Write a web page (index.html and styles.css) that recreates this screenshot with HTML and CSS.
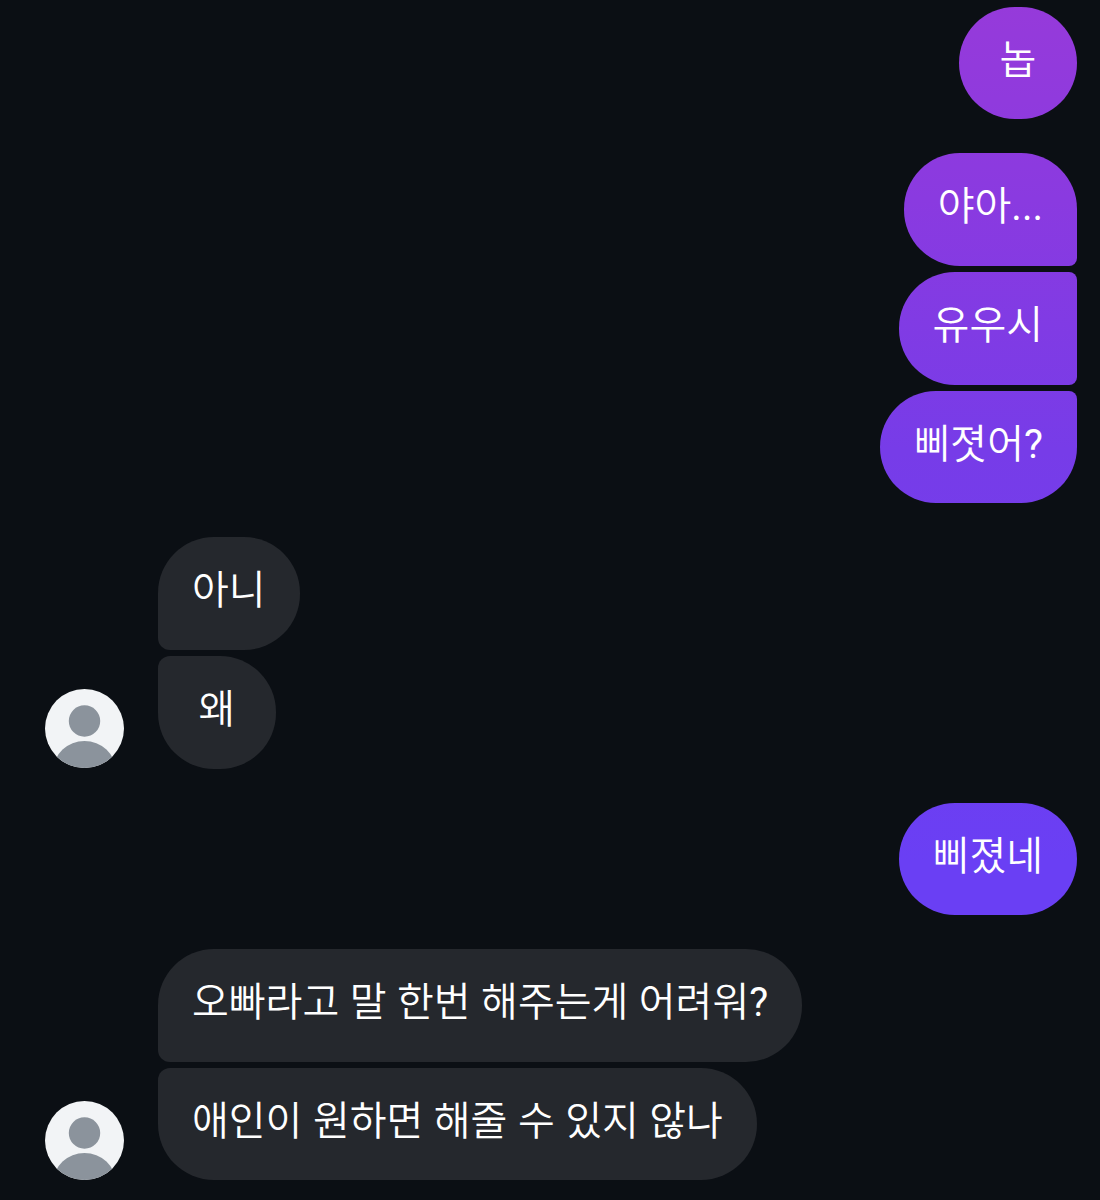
FILE: index.html
```html
<!DOCTYPE html>
<html lang="ko">
<head>
<meta charset="utf-8">
<title>Chat</title>
<link rel="stylesheet" href="styles.css">
</head>
<body>
<main class="chat">
  <section class="group out">
    <div class="bubble solo">놉</div>
  </section>
  <section class="group out">
    <div class="bubble first">야아<span class="punct">...</span></div>
    <div class="bubble middle">유우시</div>
    <div class="bubble last">삐졋어<span class="punct">?</span></div>
  </section>
  <section class="group in">
    <svg class="avatar" viewBox="0 0 79 79" aria-hidden="true">
      <defs><clipPath id="a1"><circle cx="39.5" cy="39.5" r="39.5"/></clipPath></defs>
      <g clip-path="url(#a1)">
        <rect width="79" height="79" fill="#f2f4f6"/>
        <circle cx="39.5" cy="32" r="15.7" fill="#8b939c"/>
        <ellipse cx="39.5" cy="81" rx="31" ry="29" fill="#8b939c"/>
      </g>
    </svg>
    <div class="stack">
      <div class="bubble first">아니</div>
      <div class="bubble last">왜</div>
    </div>
  </section>
  <section class="group out">
    <div class="bubble solo">삐졌네</div>
  </section>
  <section class="group in">
    <svg class="avatar" viewBox="0 0 79 79" aria-hidden="true">
      <defs><clipPath id="a2"><circle cx="39.5" cy="39.5" r="39.5"/></clipPath></defs>
      <g clip-path="url(#a2)">
        <rect width="79" height="79" fill="#f2f4f6"/>
        <circle cx="39.5" cy="32" r="15.7" fill="#8b939c"/>
        <ellipse cx="39.5" cy="81" rx="31" ry="29" fill="#8b939c"/>
      </g>
    </svg>
    <div class="stack">
      <div class="bubble first">오빠라고 말 한번 해주는게 어려워<span class="punct">?</span></div>
      <div class="bubble last">애인이 원하면 해줄 수 있지 않나</div>
    </div>
  </section>
</main>
</body>
</html>
```
FILE: styles.css
```css
html, body {
  margin: 0;
  height: 100%;
  background: #0b0f14;
  overflow: hidden;
}
.chat {
  display: flex;
  flex-direction: column;
  gap: 34px;
  padding: 6.8px 23px 0 45px;
  font-family: Roboto, "Noto Sans CJK KR", "Noto Sans", sans-serif;
  font-size: 40px;
  font-weight: 350;
  word-spacing: 0.75px;
  color: #fff;
}
.group {
  display: flex;
  gap: 34px;
}
.group.out {
  flex-direction: column;
  align-items: flex-end;
  gap: 6.25px;
}
.group.in {
  align-items: flex-end;
}
.stack {
  display: flex;
  flex-direction: column;
  align-items: flex-start;
  gap: 6.25px;
}
.avatar {
  width: 79px;
  height: 79px;
  flex: none;
  margin-bottom: 0.6px;
}
.bubble {
  box-sizing: border-box;
  height: 112.5px;
  min-width: 118px;
  padding: 26px 34px 0;
  line-height: 56px;
  border-radius: 56px;
  text-align: center;
  white-space: nowrap;
}
.punct {
  font-weight: 400;
}
.out .bubble {
  background: linear-gradient(180deg, #963ada 0, #8a3ae0 200px, #773ce8 450px, #6a3ff4 860px) fixed;
}
.out .first { border-bottom-right-radius: 8px; }
.out .middle { border-top-right-radius: 8px; border-bottom-right-radius: 8px; }
.out .last { border-top-right-radius: 8px; }
.in .bubble { background: #25282d; }
.in .first { border-bottom-left-radius: 12px; }
.in .last { border-top-left-radius: 12px; }
```
